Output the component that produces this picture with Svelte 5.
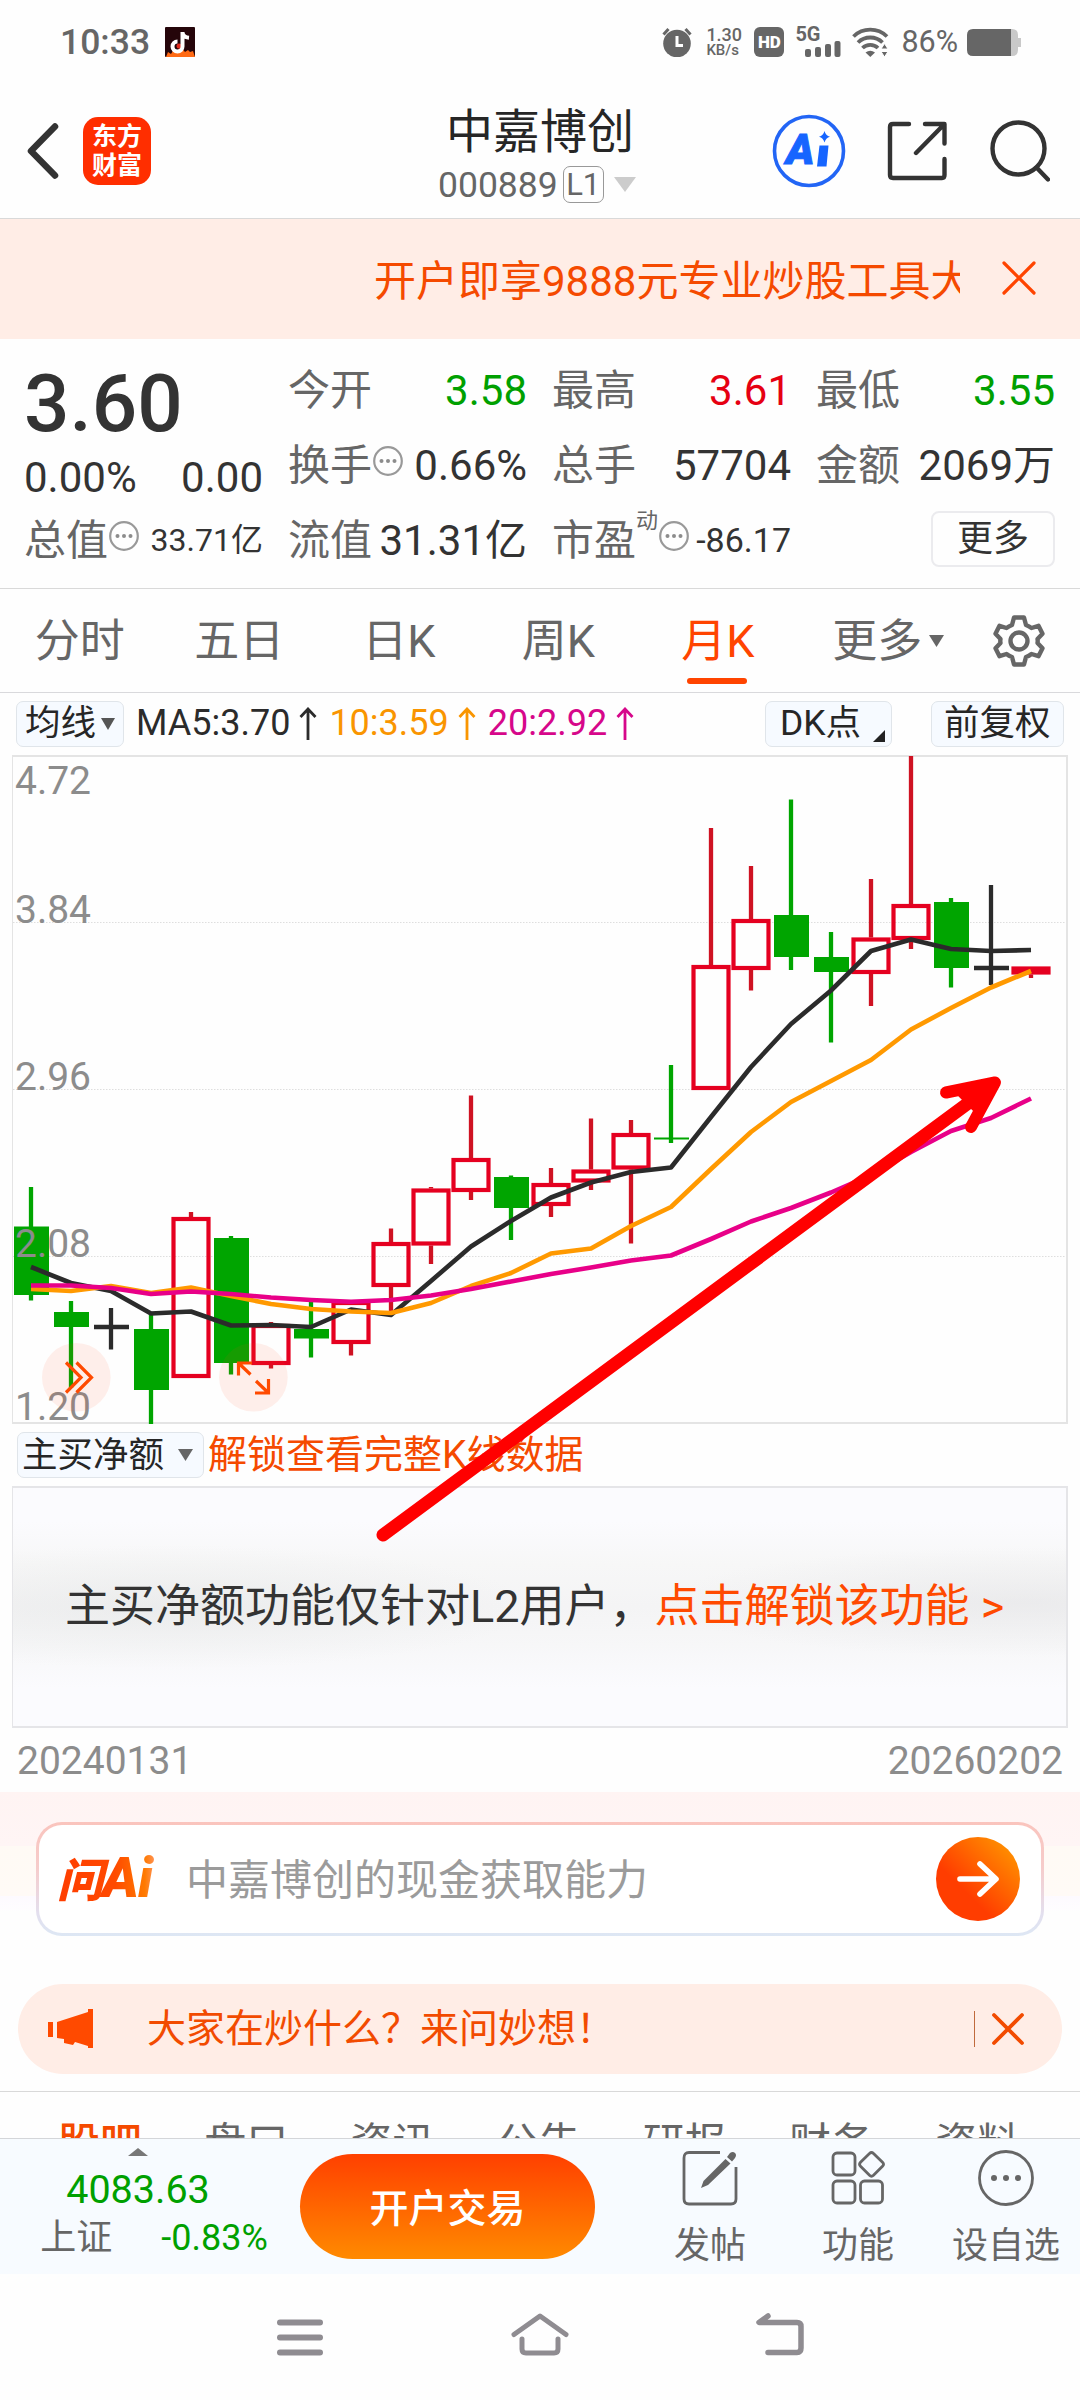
<script>
  const quotes = [
    { label: '今开', value: '3.58', tone: 'down' },
    { label: '最高', value: '3.61', tone: 'up' },
    { label: '最低', value: '3.55', tone: 'down' },
    { label: '换手', value: '0.66%', info: true },
    { label: '总手', value: '57704' },
    { label: '金额', value: '2069万' },
    { label: '流值', value: '31.31亿' },
    { label: '市盈', sup: '动', value: '-86.17', info: true, small: true },
  ];

  const periods = ['分时', '五日', '日K', '周K', '月K', '更多'];
  let period = '月K';

  const averages = [
    { text: 'MA5:3.70', color: '#2b2b2b' },
    { text: '10:3.59', color: '#f99500' },
    { text: '20:2.92', color: '#d6078a' },
  ];

  // [kind, body top, body bottom, high, low]
  const candles = [
    ['down', 1226.5, 1295, 1187, 1300.5],
    ['down', 1312, 1327, 1301, 1388],
    ['flat', 1327, 1327, 1308, 1349.5],
    ['down', 1329, 1390, 1313, 1424],
    ['up', 1217, 1378, 1212, 1378],
    ['down', 1238, 1363, 1236, 1374.5],
    ['up', 1324, 1365, 1322, 1368.5],
    ['down', 1329, 1338.5, 1301.5, 1357.5],
    ['up', 1301, 1344, 1301, 1355.5],
    ['up', 1242, 1287, 1228.5, 1315],
    ['up', 1188.5, 1245.5, 1187, 1264],
    ['up', 1158, 1192, 1095.5, 1200],
    ['down', 1177, 1208, 1175.5, 1240],
    ['up', 1183, 1206, 1168, 1217],
    ['up', 1169.5, 1182.5, 1118.5, 1190],
    ['up', 1133, 1169.5, 1120, 1243.5],
    ['down', 1137.5, 1139.5, 1065, 1143],
    ['up', 965, 1090, 828, 1090],
    ['up', 919, 970, 866, 990.5],
    ['down', 915, 957, 799.5, 970],
    ['down', 957, 972, 932, 1042.5],
    ['up', 937.5, 974, 879, 1006],
    ['up', 904, 940, 756, 949],
    ['down', 902, 968, 898, 987.5],
    ['flat', 968, 968, 885, 985],
    ['up', 966.5, 974.5, 966.5, 978],
  ];

  const ma5 = [1267, 1283, 1291, 1313.5, 1311.5, 1325.5, 1325, 1327, 1309.5, 1315, 1281, 1246.5, 1221, 1197.5, 1182.5, 1172, 1167.5, 1117, 1067, 1024, 990.5, 951, 939.5, 949, 951, 950];
  const ma10 = [1289, 1291, 1286, 1293, 1287.5, 1296, 1304, 1309, 1311.5, 1313, 1303, 1286, 1273, 1253.5, 1248.5, 1226, 1207, 1169, 1132, 1102, 1081, 1060, 1029.5, 1008, 987.5, 971];
  const ma20 = [1285.5, 1285.5, 1288, 1294, 1291.5, 1294, 1297.5, 1300, 1301.7, 1300, 1295.5, 1289, 1281.5, 1274, 1267.5, 1260.5, 1255.5, 1239, 1221.5, 1208, 1192.5, 1175, 1152, 1131, 1118, 1098.5];

  const colors = { up: '#e50020', down: '#00a500', flat: '#2b2b2b' };
  const cx = (i) => 31 + i * 40;
  const line = (values) => values.map((y, i) => `${cx(i)},${y}`).join(' ');

  const sections = ['股吧', '盘口', '资讯', '公告', '研报', '财务', '资料'];
</script>

{#snippet info()}
  <svg class="info" width="30" height="30" viewBox="0 0 30 30">
    <circle cx="15" cy="15" r="13.8" fill="none" stroke="#999" stroke-width="2.2" />
    <g fill="#8c8c8c"><circle cx="8.5" cy="15" r="2" /><circle cx="15" cy="15" r="2" /><circle cx="21.5" cy="15" r="2" /></g>
  </svg>
{/snippet}

<div class="screen">
  <div class="status">
    <span class="clock">10:33</span>
    <svg class="douyin" width="30" height="30" viewBox="0 0 30 30">
      <rect width="30" height="30" rx="1" fill="#25050a" />
      <path d="M1 30l2-5 3 2 3-5 3 2 4-4 4 5 3-2 2 2 3-1 2 6z" fill="#ff6a14" />
      <circle cx="14" cy="19" r="2.5" fill="#e32a1e" />
      <path d="M17.5 5v14.500a5 5 0 1 1-5-5M17.500 5.500c.5 3.500 2.500 5 6.500 5.300" fill="none" stroke="#fff" stroke-width="4" />
    </svg>
    <div class="status-icons">
      <svg class="alarm" width="30" height="30" viewBox="0 0 30 30">
        <circle cx="15" cy="16.500" r="13.800" fill="#666" />
        <path d="M1.500 7.500l5-5.500M28.500 7.500l-5-5.500" stroke="#666" stroke-width="3" />
        <path d="M15 9v9.500h6" fill="none" stroke="#fff" stroke-width="3" />
      </svg>
      <div class="speed"><b>1.30</b><span>KB/s</span></div>
      <div class="hd">HD</div>
      <div class="cell">
        <b>5G</b>
        <svg width="36" height="16" viewBox="0 0 36 16" fill="#666">
          <rect x="0" y="8" width="6" height="8" rx="2" /><rect x="10" y="6" width="6" height="10" rx="2" />
          <rect x="20" y="3" width="6" height="13" rx="2" /><rect x="29.500" y="0" width="6" height="16" rx="2" />
        </svg>
      </div>
      <svg class="wifi" width="37" height="30" viewBox="0 0 37 30">
        <g fill="none" stroke="#666" stroke-width="3.800">
          <path d="M1.500 9.500a24 24 0 0 1 33.500 0" /><path d="M6 15.500a17.500 17.500 0 0 1 24.500 0" /><path d="M10.500 21a11 11 0 0 1 15.500 0" />
        </g>
        <path d="M13.500 25.500q4.700-3.500 9.500 0L18.300 30z" fill="#666" />
        <path d="M29 22l3.500-5.500L36 22zM29 24.500l3.500 5.500 3.500-5.500z" fill="#666" stroke="#fff" />
      </svg>
      <span class="percent">86%</span>
      <svg class="battery" width="54" height="27" viewBox="0 0 54 27">
        <path d="M40 0h5q6 0 6 6v3h3v9h-3v3q0 6-6 6h-5z" fill="#c9c9c9" />
        <path d="M44 0v27H6q-6 0-6-6V6q0-6 6-6z" fill="#666" />
      </svg>
    </div>
  </div>

  <header>
    <svg class="back" width="34" height="58" viewBox="0 0 34 58"><path d="M29 4.500L5 29l24 24.500" fill="none" stroke="#333" stroke-width="6.500" stroke-linecap="round" stroke-linejoin="round" /></svg>
    <div class="logo"><span>东方</span><span>财富</span></div>
    <div class="title">
      <h1>中嘉博创</h1>
      <div class="code">
        000889<span class="level">L1</span>
        <svg width="22" height="15" viewBox="0 0 22 15"><path d="M0 0h22L11 15z" fill="#ccc" /></svg>
      </div>
    </div>
    <div class="tools">
      <svg width="74" height="74" viewBox="0 0 74 74">
        <circle cx="37" cy="37" r="34.500" fill="none" stroke="#2265f5" stroke-width="3.600" />
        <text class="ai-mark" x="14" y="50">A</text>
        <path d="M47.500 31.500h9l-2 21h-9.500z" fill="#1665ff" />
        <path d="M52.500 17q1.200 4.700 5.500 5.800-4.300 1.200-5.500 5.700-1.200-4.500-5.500-5.700 4.300-1.100 5.500-5.800z" fill="#1665ff" />
      </svg>
      <svg width="60" height="60" viewBox="0 0 60 60" fill="none" stroke="#333" stroke-width="4.400" stroke-linecap="round" stroke-linejoin="round">
        <path d="M22 3H6Q3 3 3 6v48q0 3 3 3h49q2.500 0 2.500-3V38" /><path d="M38 3h19.500v19.500M57 3.500L29 32" />
      </svg>
      <svg width="60" height="62" viewBox="0 0 60 62" fill="none" stroke="#333" stroke-width="4.400" stroke-linecap="round">
        <circle cx="28.500" cy="28.500" r="26" /><path d="M46.500 47.500L58 59.500" />
      </svg>
    </div>
  </header>

  <div class="promo">
    <div class="marquee">开户即享9888元专业炒股工具大</div>
    <svg width="34" height="34" viewBox="0 0 34 34"><path d="M2 2l30 30M32 2L2 32" stroke="#ff4400" stroke-width="3.200" stroke-linecap="round" /></svg>
  </div>

  <section class="quote">
    <div class="main-price">
      <div class="price">3.60</div>
      <div class="change"><span>0.00%</span><span>0.00</span></div>
      <div class="item">
        <span class="label">总值</span>{@render info()}<span class="value tiny">33.71亿</span>
      </div>
    </div>
    <div class="stats">
      {#each quotes as q}
        <div class="item">
          <span class="label">{q.label}</span>
          {#if q.sup}<span class="sup">{q.sup}</span>{/if}
          {#if q.info}{@render info()}{/if}
          <span class="value {q.tone ?? ''}" class:small={q.small}>{q.value}</span>
        </div>
      {/each}
      <div class="item"><button class="more">更多</button></div>
    </div>
  </section>

  <nav class="periods">
    {#each periods as p}
      <button class:active={p === period} on:click={() => (period = p)}>
        {p}
        {#if p === '更多'}<svg class="drop" width="15" height="12" viewBox="0 0 15 12"><path d="M0 0h15L7.500 12z" fill="#666" /></svg>{/if}
      </button>
    {/each}
    <svg class="gear" width="52" height="54" viewBox="0 0 52 54" fill="none" stroke="#666" stroke-width="4.400" stroke-linejoin="round">
      <path d="M21 3.500h10l2 7.500q3 1.200 5.500 3l7-2.200 4 8-5 5.200q.4 2 0 4l5 5.200-4 8-7-2.200q-2.500 2-5.500 3l-2 7.500H21l-2-7.500q-3-1-5.500-3l-7 2.200-4-8 5-5.200q-.4-2 0-4l-5-5.200 4-8 7 2.200q2.500-1.800 5.500-3z" />
      <circle cx="26" cy="27" r="8.500" />
    </svg>
  </nav>

  <div class="ma-row">
    <button class="chip ma">均线<svg width="14" height="12" viewBox="0 0 14 12"><path d="M0 0h14L7 12z" fill="#555" /></svg></button>
    {#each averages as a}
      <span class="avg" style="color: {a.color}">{a.text}
        <svg width="18" height="34" viewBox="0 0 18 34"><path d="M9 33V2M1.500 10L9 2l7.500 8" fill="none" stroke="currentColor" stroke-width="2.800" /></svg>
      </span>
    {/each}
    <button class="chip dk">DK点<svg width="12" height="12" viewBox="0 0 12 12"><path d="M12 0v12H0z" fill="#222" /></svg></button>
    <button class="chip adjust">前复权</button>
  </div>

  <svg class="chart" width="1080" height="670" viewBox="0 754 1080 670">
    {#each [922.5, 1089.5, 1256.5] as y}
      <line x1="13" x2="1067" y1={y} y2={y} stroke="#dedede" stroke-dasharray="1.500 1.500" />
    {/each}
    <path d="M12.500 756V1423" stroke="#e4e4e4" />
    <path d="M12 756H1067V1423H12" fill="none" stroke="#e4e4e4" stroke-width="2" />
    {#each candles as [kind, top, bottom, high, low], i}
      {#if kind === 'up'}
        <path d="M{cx(i)} {high}V{top}M{cx(i)} {bottom}V{low}" stroke="#cf1222" stroke-width="4.300" />
        <rect x={cx(i) - 17.5} y={top + 2} width="35" height={Math.max(bottom - top - 4, 1)} fill="none" stroke={colors.up} stroke-width="4.200" />
      {:else}
        <path d="M{cx(i)} {high}V{low}" stroke={colors[kind]} stroke-width="4.300" />
        {#if kind === 'down'}
          <rect x={cx(i) - 17} y={top} width="35" height={bottom - top} fill={colors.down} />
        {:else}
          <path d="M{cx(i) - 17} {top}h35" stroke={colors.flat} stroke-width="4.500" />
        {/if}
      {/if}
    {/each}
    <g class="axis">
      <text x="15" y="794">4.72</text>
      <text x="15" y="923">3.84</text>
      <text x="15" y="1090">2.96</text>
      <text x="15" y="1257">2.08</text>
      <text x="15" y="1420">1.20</text>
    </g>
    <g fill="none" stroke-width="4.600" stroke-linejoin="round">
      <polyline points={line(ma5)} stroke="#2b2b2b" />
      <polyline points={line(ma10)} stroke="#ff9900" />
      <polyline points={line(ma20)} stroke="#e80088" />
    </g>
    <g fill="#ff4a1c" fill-opacity=".085"><circle cx="76.300" cy="1377.300" r="34.300" /><circle cx="253.400" cy="1377.300" r="34.300" /></g>
    <g fill="none" stroke="#ff4a00" stroke-width="3.200">
      <path d="M66 1362.500l15 15-15 15M76.500 1362.500l15 15-15 15" />
      <path d="M252 1363h-13.500v12.500M239 1363.500l11.500 11M255 1393h13.500v-14M268 1392.500l-12-11.500" />
    </g>
  </svg>

  <div class="sub-row">
    <button class="chip flow">主买净额<svg width="15" height="12" viewBox="0 0 15 12"><path d="M0 0h15L7.500 12z" fill="#666" /></svg></button>
    <span class="unlock">解锁查看完整K线数据</span>
  </div>

  <div class="level2">
    <span>主买净额功能仅针对L2用户，</span><span class="orange">点击解锁该功能 &gt;</span>
  </div>

  <div class="dates"><span>20240131</span><span>20260202</span></div>

  <section class="ask">
    <div class="ask-box">
      <div class="ask-logo"><span>问</span>Ai</div>
      <span class="hint">中嘉博创的现金获取能力</span>
      <button class="go">
        <svg width="44" height="38" viewBox="0 0 44 38"><path d="M4 19h35M24 4l16 15-16 15" fill="none" stroke="#fff" stroke-width="5.600" stroke-linecap="round" stroke-linejoin="round" /></svg>
      </button>
    </div>
    <div class="notice">
      <svg class="horn" width="46" height="40" viewBox="0 0 46 40" fill="#ff4a00">
        <path d="M0 13h5v15H0zM9 13l31-10V0h5v39h-5v-2l-13-4-2 3-9-2 0-4-7-1z" />
      </svg>
      <span>大家在炒什么？来问妙想！</span>
      <i></i>
      <svg width="34" height="34" viewBox="0 0 34 34"><path d="M3 3l28 28M31 3L3 31" stroke="#f24b00" stroke-width="3.800" stroke-linecap="round" /></svg>
    </div>
  </section>

  <nav class="sections">
    {#each sections as s, i}<span class:active={i === 0}>{s}</span>{/each}
  </nav>

  <footer>
    <div class="index">
      <svg width="20" height="8" viewBox="0 0 20 8"><path d="M10 0l10 8H0z" fill="#777" /></svg>
      <div class="points">4083.63</div>
      <div class="pct"><span>上证</span><b>-0.83%</b></div>
    </div>
    <button class="trade">开户交易</button>
    <div class="actions">
      <div>
        <svg width="58" height="58" viewBox="0 0 58 58">
          <path d="M39 3.500H8Q3 3.500 3 9v41q0 5 5 5h42q5 0 5-5V18" fill="none" stroke="#666" stroke-width="2.800" />
          <path d="M49 4q3-2 5 0t0 5l-3 3.500-5-4.500zM44.500 10l5 4.500L27 36l-7 3 2.500-7z" fill="#666" />
        </svg>
        发帖
      </div>
      <div>
        <svg width="58" height="58" viewBox="0 0 58 58" fill="none" stroke="#666" stroke-width="2.800">
          <rect x="4" y="4" width="22" height="22" rx="4" /><rect x="4" y="32" width="22" height="22" rx="4" /><rect x="31.500" y="32" width="22" height="22" rx="4" />
          <path d="M40.500 4.500q2-2 4 0l9 8.800q2 2 0 4l-9 9q-2 2-4 0l-9-9q-2-2 0-4z" />
        </svg>
        功能
      </div>
      <div>
        <svg width="58" height="58" viewBox="0 0 58 58">
          <circle cx="29" cy="29" r="26.500" fill="none" stroke="#666" stroke-width="2.800" />
          <g fill="#666"><circle cx="17" cy="29" r="3" /><circle cx="29" cy="29" r="3" /><circle cx="41" cy="29" r="3" /></g>
        </svg>
        设自选
      </div>
    </div>
  </footer>

  <div class="system-nav">
    <svg width="60" height="48" viewBox="0 0 60 48" stroke="#8f8c91" stroke-width="6" stroke-linecap="round"><path d="M10 11.500h40M10 26.500h40M10 41.500h40" /></svg>
    <svg width="60" height="48" viewBox="0 0 60 48" fill="none" stroke="#8f8c91" stroke-width="5" stroke-linecap="round" stroke-linejoin="round"><path d="M4 23.500L30 5l26 18.500M12 28v10q0 4 4 4h28q4 0 4-4V28" /></svg>
    <svg width="60" height="48" viewBox="0 0 60 48" fill="none" stroke="#8f8c91" stroke-width="5.500" stroke-linecap="round" stroke-linejoin="round"><path d="M18 5l-9 6.500h38q4 0 4 4V37q0 4.500-4 4.500H18" /></svg>
  </div>

  <svg class="trend" width="640" height="480" viewBox="370 1070 640 480" fill="none" stroke="#ff0000" stroke-linecap="round" stroke-linejoin="round">
    <path d="M383 1535L990 1087" stroke-width="13" />
    <path d="M946 1092.500L995 1082.500 971 1127" stroke-width="12" />
    <path d="M960 1095L992 1085 975 1110z" fill="#ff0000" stroke-width="4" />
  </svg>
</div>

<style>
  :global(body) {
    background: #fff;
  }

  .screen {
    position: relative;
    width: 1080px;
    height: 2400px;
    overflow: hidden;
    background: #fefefe;
    font-family: Roboto, 'Noto Sans CJK SC', sans-serif;
    color: #333;
  }

  .screen * {
    box-sizing: border-box;
  }

  svg {
    display: block;
    flex: none;
  }

  button {
    padding: 0;
    border: 0;
    background: none;
    font: inherit;
    color: inherit;
  }

  span,
  .marquee {
    white-space: nowrap;
  }

  .status {
    display: flex;
    align-items: center;
    height: 84px;
    padding: 0 59px 0 60px;
    color: #666;
  }

  .clock {
    width: 105px;
    font-size: 35.5px;
    font-weight: 500;
    line-height: 84px;
  }

  .status-icons {
    display: flex;
    align-items: center;
    margin-left: auto;
    height: 30px;
  }

  .speed {
    display: flex;
    flex-direction: column;
    width: 48px;
    margin-left: 14px;
    font-weight: 500;
    font-size: 15px;
    line-height: 14px;
  }

  .speed b {
    font-size: 18px;
    font-weight: 500;
    line-height: 16px;
  }

  .hd {
    width: 30px;
    height: 30px;
    border-radius: 6px;
    background: #666;
    color: #fff;
    font-size: 17px;
    font-weight: 900;
    line-height: 30px;
    text-align: center;
  }

  .cell {
    display: flex;
    flex-direction: column;
    width: 46px;
    height: 30px;
    margin: 0 11px;
  }

  .cell b {
    height: 14px;
    font-size: 20px;
    line-height: 15px;
  }

  .cell svg {
    margin-left: 10px;
  }

  .percent {
    margin: 0 9px 0 12px;
    font-size: 30.5px;
    line-height: 30px;
  }

  header {
    display: flex;
    align-items: center;
    height: 135px;
    padding-left: 26px;
    border-bottom: 1px solid #d9d9d9;
  }

  .logo {
    display: flex;
    flex-direction: column;
    align-items: center;
    justify-content: center;
    width: 68px;
    height: 68px;
    margin-left: 23px;
    border-radius: 15px;
    background: #ff2e00;
    color: #fff;
    font-size: 25px;
    font-weight: 700;
    line-height: 29px;
  }

  .title {
    width: 220px;
    margin-left: 284px;
    padding-top: 7px;
  }

  h1 {
    margin: 0 0 0 11px;
    font-size: 47px;
    font-weight: 400;
    line-height: 60px;
    color: #262626;
  }

  .code {
    display: flex;
    align-items: center;
    height: 46px;
    padding-left: 3px;
    font-size: 35.5px;
    line-height: 46px;
    color: #666;
  }

  .level {
    width: 41px;
    height: 37px;
    margin: 0 10px 0 5px;
    border: 1.5px solid #999;
    border-radius: 7px;
    font-size: 31px;
    line-height: 36px;
    text-align: center;
  }

  .tools {
    display: flex;
    align-items: center;
    margin-left: 117px;
  }

  .tools svg + svg {
    margin-left: 41px;
  }

  .tools svg:last-child {
    margin-left: 43px;
  }

  .ai-mark {
    font-family: Roboto, sans-serif;
    font-size: 43px;
    font-weight: 900;
    font-style: italic;
    fill: #1665ff;
    stroke: #1665ff;
  }

  .promo {
    display: flex;
    align-items: center;
    height: 120px;
    padding-left: 374px;
    background: #ffede6;
    color: #f54a00;
  }

  .marquee {
    width: 586px;
    margin: 5px 42px 0 0;
    overflow: hidden;
    font-size: 42px;
    line-height: 60px;
  }

  .promo svg {
    margin-bottom: 3px;
  }

  .quote {
    display: flex;
    gap: 27px;
    height: 250px;
    padding: 14px 24px 0;
    border-bottom: 1px solid #d9d9d9;
    font-size: 42px;
  }

  .main-price {
    width: 239px;
  }

  .price {
    height: 102px;
    font-size: 80px;
    font-weight: 500;
    line-height: 102px;
  }

  .change {
    display: flex;
    justify-content: space-between;
    height: 48px;
    line-height: 45px;
  }

  .stats {
    display: grid;
    grid-template-columns: repeat(3, 239px);
    grid-auto-rows: 75px;
    column-gap: 25px;
    margin-left: -2px;
  }

  .item {
    display: flex;
    height: 75px;
    line-height: 75px;
  }

  .label {
    color: #666;
  }

  .value {
    margin-left: auto;
  }

  .value.up {
    color: #e60012;
  }

  .value.down {
    color: #00a000;
  }

  .tiny {
    font-size: 32px;
  }

  .small {
    font-size: 34px;
  }

  .info {
    margin: 18px 0 0 1px;
  }

  .sup {
    height: 40px;
    font-size: 22px;
    line-height: 36px;
    color: #666;
  }

  .more {
    width: 124px;
    height: 56px;
    margin: 8px 0 0 auto;
    border: 2px solid #ebebee;
    border-radius: 8px;
    font-size: 36px;
    line-height: 50px;
  }

  .periods {
    display: flex;
    align-items: center;
    height: 104px;
    border-bottom: 1px solid #d9d9dc;
    color: #666;
  }

  .periods button {
    position: relative;
    width: 159.5px;
    height: 103px;
    font-size: 45px;
    line-height: 106px;
  }

  .periods .active {
    color: #ff4400;
  }

  .periods .active::after {
    content: '';
    position: absolute;
    left: 49px;
    bottom: 8px;
    width: 60px;
    height: 6px;
    border-radius: 3px;
    background: #ff4400;
  }

  .drop {
    position: absolute;
    right: 13px;
    top: 46px;
  }

  .gear {
    margin-left: 36px;
  }

  .ma-row {
    display: flex;
    align-items: center;
    height: 61px;
    padding: 0 16px;
    font-size: 36px;
  }

  .chip {
    display: flex;
    align-items: center;
    height: 46px;
    border: 1.5px solid #e0e5ea;
    border-radius: 7px;
    background: #f6faff;
    color: #262626;
    font-size: 35.5px;
    line-height: 43px;
    white-space: nowrap;
  }

  .ma {
    width: 108px;
    margin-right: 12px;
    padding-left: 8px;
  }

  .ma svg {
    margin-left: 5px;
  }

  .avg {
    display: flex;
    align-items: center;
    margin-right: 12px;
    line-height: 47px;
  }

  .avg svg {
    margin-left: 9px;
  }

  .dk {
    width: 127px;
    margin-left: auto;
    padding-left: 14px;
  }

  .dk svg {
    margin: 24px 0 0 12px;
  }

  .adjust {
    width: 133px;
    margin-left: 39px;
    padding-left: 12px;
  }

  .axis {
    font-family: Roboto, sans-serif;
    font-size: 39px;
    fill: #8c8c8c;
  }

  .sub-row {
    display: flex;
    align-items: center;
    height: 62px;
    padding-left: 17px;
  }

  .flow {
    width: 187px;
    padding-left: 4px;
  }

  .flow svg {
    margin-left: 14px;
  }

  .unlock {
    margin-left: 4px;
    font-size: 39px;
    line-height: 61px;
    color: #f54a00;
  }

  .level2 {
    display: flex;
    align-items: center;
    width: 1056px;
    height: 242px;
    margin-left: 12px;
    padding-left: 52px;
    border: 2px solid #e5e5e8;
    border-left-width: 1px;
    background:
      radial-gradient(ellipse 360px 62px at 15% 50%, rgba(226, 228, 228, 0.5), rgba(238, 238, 238, 0)),
      radial-gradient(ellipse 360px 55px at 96% 48%, rgba(226, 226, 228, 0.5), rgba(238, 238, 238, 0)),
      linear-gradient(#fbfbfe 14%, #f7f7f7 32%, #f4f4f5 50%, #f7f7f8 66%, #fbfbfe 84%);
    font-size: 45px;
    line-height: 60px;
  }

  .orange {
    color: #ff4a00;
  }

  .dates {
    display: flex;
    justify-content: space-between;
    height: 64px;
    padding: 0 17px;
    font-size: 39px;
    line-height: 67px;
    color: #8c8c8c;
  }

  .ask {
    height: 300px;
    padding: 30px 18px 0;
    border-bottom: 1px solid #d9d9d9;
    background: linear-gradient(#fff4f3, #fff5f5 54px, #fffaf5 54px, #fffaf6 104px, #fdfaff 104px, #fefdff 118px, #fefefe 119px);
  }

  .ask-box {
    display: flex;
    align-items: center;
    height: 114px;
    margin: 0 18px;
    padding: 0 21px 0 18px;
    border: 3px solid transparent;
    border-radius: 26px;
    background:
      linear-gradient(#fff, #fff) padding-box,
      linear-gradient(#fac4bd, #f6cccb 40%, #e3dfee 80%, #dde7f4) border-box;
  }

  .ask-logo {
    width: 129px;
    background: linear-gradient(90deg, #ff3d00, #ff4a00 45%, #ff7a00 68%, #ff9a70 78%);
    background-clip: text;
    color: transparent;
    font-size: 56px;
    font-weight: 900;
    font-style: italic;
    line-height: 60px;
    letter-spacing: -1px;
  }

  .ask-logo span {
    font-size: 46px;
  }

  .hint {
    margin-top: 4px;
    font-size: 42px;
    line-height: 60px;
    color: #9b9b9b;
  }

  .go {
    display: flex;
    align-items: center;
    justify-content: center;
    width: 84px;
    height: 84px;
    margin-left: auto;
    border-radius: 50%;
    background: linear-gradient(45deg, #ff3d00 35%, #ff8a00 85%);
  }

  .notice {
    display: flex;
    align-items: center;
    height: 90px;
    margin-top: 48px;
    padding: 0 37px 0 30px;
    border-radius: 45px;
    background: #ffede6;
    color: #f24b00;
    font-size: 39px;
    line-height: 60px;
  }

  .horn {
    margin-right: 53px;
  }

  .notice i {
    width: 1px;
    height: 36px;
    margin: 0 16px 0 auto;
    background: #c06a3c;
  }

  .sections {
    display: flex;
    height: 46px;
    padding: 0 27px;
    overflow: hidden;
    font-size: 42px;
    line-height: 104px;
    color: #666;
  }

  .sections span {
    width: 146.2px;
    flex: none;
    text-align: center;
  }

  .sections .active {
    color: #f54a00;
    font-weight: 500;
  }

  footer {
    display: flex;
    height: 136px;
    border-top: 1px solid #d4d6d9;
    background: #f7fbff;
  }

  .index {
    display: flex;
    flex-direction: column;
    align-items: center;
    width: 276px;
    padding: 9px 0 0;
    font-size: 36px;
    color: #00a000;
  }

  .points {
    margin-top: 10px;
    font-size: 39.5px;
    line-height: 48px;
  }

  .pct {
    display: flex;
    gap: 49px;
    margin-left: 32px;
    line-height: 49px;
  }

  .pct span {
    color: #666;
  }

  .pct b {
    font-weight: 400;
  }

  .trade {
    width: 295px;
    height: 105px;
    margin: 15px 0 0 24px;
    border-radius: 53px;
    background: linear-gradient(#ff4000, #ff8a00);
    color: #fff;
    font-size: 39px;
    font-weight: 500;
    line-height: 111px;
  }

  .actions {
    display: flex;
    margin-left: 41px;
    padding-top: 10px;
  }

  .actions div {
    display: flex;
    flex-direction: column;
    align-items: center;
    width: 148px;
    font-size: 36px;
    line-height: 79px;
    color: #666;
  }

  .system-nav {
    display: flex;
    justify-content: center;
    gap: 180px;
    height: 126px;
    padding-top: 37px;
  }

  .trend {
    position: absolute;
    left: 370px;
    top: 1070px;
  }
</style>
